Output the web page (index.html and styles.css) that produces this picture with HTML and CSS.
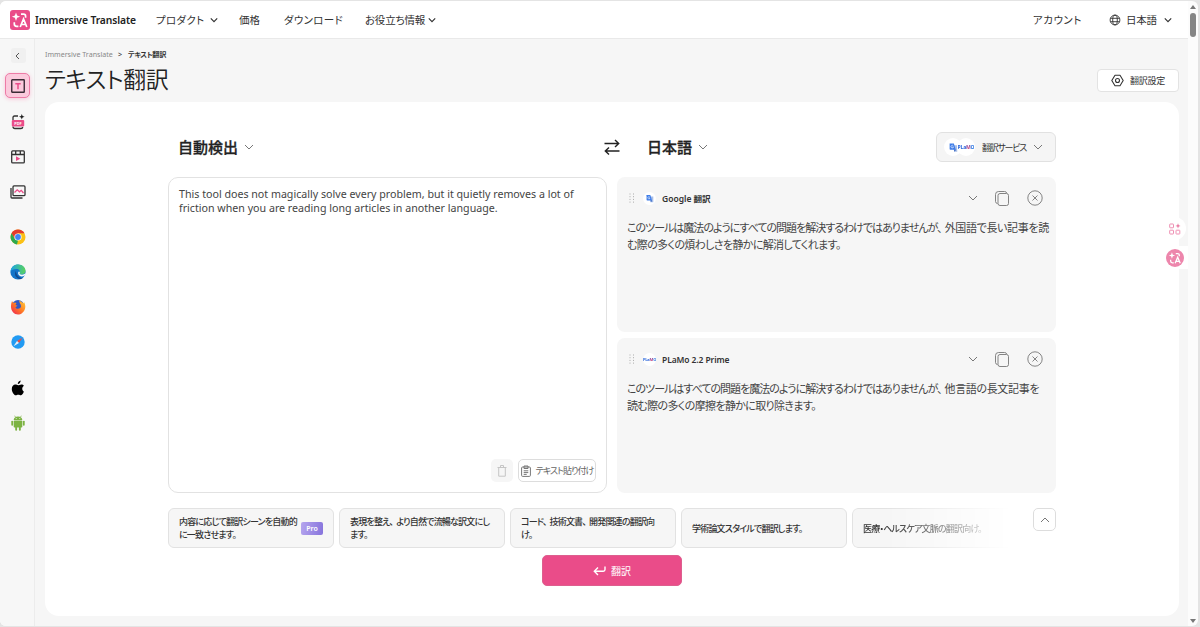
FILE: index.html
```
<!DOCTYPE html>
<html lang="ja">
<head>
    <meta charset="UTF-8">
    <meta name="viewport" content="width=device-width, initial-scale=1.0">
    <title>テキスト翻訳</title>
    <link rel="stylesheet" href="styles.css">
</head>
<body>
    <svg class="sprite" width="0" height="0">
        <symbol id="down" viewBox="0 0 10 10"><path d="M1 3l4 4 4-4" fill="none" stroke="currentColor"/></symbol>
        <symbol id="lang" viewBox="0 0 20 20">
            <path d="M6 2.500l1.100 3.100 3.100 1.100-3.100 1.100L6 10.900 4.900 7.800 1.800 6.700l3.100-1.100z" fill="#fff"/>
            <path d="M11 4.200h2.600q2 0 2 2v1.600M4.300 12.200v1.800q0 2.300 2.300 2.300h1.800M10.200 17l3.300-8 3.300 8M11.400 14.500h4.200" fill="none" stroke="#fff" stroke-width="1.700"/>
        </symbol>
        <symbol id="gtr" viewBox="0 0 12 12">
            <path d="M5 3h6v8.500H7z" fill="#a9bfe8"/>
            <path d="M1 .8h5.500L9 9H1.800Q.8 9 .8 8V1z" fill="#3f7de8"/>
            <path d="M5.800 4A1.700 1.700 0 1 0 6 5.300H4.500" fill="none" stroke="#fff" stroke-width=".8"/>
            <path d="M7 9h2.300L7.300 11.500z" fill="#2457b8"/>
        </symbol>
        <symbol id="copy" viewBox="0 0 14 15">
            <rect x="3" y="2.500" width="10.500" height="12" rx="2"/><path d="M2.500 12.500Q.5 12.300.5 10.500v-7Q.5.5 3.500.5h6q1.800 0 2.200 1.500"/>
        </symbol>
        <symbol id="close" viewBox="0 0 16 16">
            <circle cx="8" cy="8" r="7.200"/><path d="M5.500 5.500l5 5M10.500 5.500l-5 5"/>
        </symbol>
        <symbol id="grip" viewBox="0 0 6 10">
            <path d="M.5 1h1M4 1h1M.5 3.700h1M4 3.700h1M.5 6.400h1M4 6.400h1M.5 9.100h1M4 9.100h1" stroke="#aaa" stroke-width="1"/>
        </symbol>
    </svg>
    <div class="window">
        <header class="header">
            <svg class="header__logo" viewBox="0 0 20 20"><rect width="20" height="20" rx="3" fill="#ea4c89"/><use href="#lang"/></svg>
            <div class="header__brand">Immersive Translate</div>
            <nav class="nav">
                <a class="nav__item nav__product">プロダクト</a><svg class="nav__arrow"><use href="#down"/></svg>
                <a class="nav__item nav__price">価格</a>
                <a class="nav__item nav__download">ダウンロード</a>
                <a class="nav__item nav__info">お役立ち情報</a><svg class="nav__arrow"><use href="#down"/></svg>
            </nav>
            <a class="nav__item nav__account">アカウント</a>
            <svg class="header__globe" viewBox="0 0 12 12"><g fill="none" stroke="#333" stroke-width=".9"><circle cx="6" cy="6" r="4.900"/><ellipse cx="6" cy="6" rx="2.300" ry="4.900"/><path d="M1.500 4.300h9M1.500 7.700h9"/></g></svg>
            <a class="nav__item nav__lang">日本語</a><svg class="nav__arrow nav__arrow_last"><use href="#down"/></svg>
        </header>
        <div class="body">
            <aside class="sidebar">
                <div class="sidebar__back"><svg width="8" height="8" viewBox="0 0 8 8"><path d="M5 1L2 4l3 3" fill="none" stroke="#555"/></svg></div>
                <div class="sidebar__item sidebar__item_active">
                    <svg width="14" height="14" viewBox="0 0 14 14"><rect x=".75" y=".75" width="12.500" height="12.500" rx=".5" fill="none" stroke="#3a2b35" stroke-width="1.400"/><path d="M4.300 4.700h5.400M7 4.700v5.600" stroke="#ea4c89" stroke-width="1.500"/></svg>
                </div>
                <div class="sidebar__item">
                    <svg width="14" height="16" viewBox="0 0 14 16"><path d="M2 6V3.500Q2 2 3.500 2H7M2 12.500Q2 14.500 4 14.500h6q1.500 0 1.800-1.500" fill="none" stroke="#333" stroke-width="1.300"/><path d="M10.800 0l.8 2 2 .8-2 .8-.8 2-.8-2-2-.8 2-.8z" fill="#222"/><rect x=".8" y="6" width="12.400" height="6.500" rx="1" fill="#ea4c89"/><text x="7" y="11" class="pdf">PDF</text></svg>
                </div>
                <div class="sidebar__item">
                    <svg width="14" height="14" viewBox="0 0 14 14"><g fill="none" stroke="#333" stroke-width="1.300"><rect x=".7" y=".9" width="12.600" height="12" rx="1"/><path d="M1 4.500h12M4.700 1v3.500M9.300 1v3.500"/></g><path d="M5 6.300l4.300 2.400L5 11.100z" fill="#ea4c89"/></svg>
                </div>
                <div class="sidebar__item">
                    <svg width="16" height="14" viewBox="0 0 16 14"><g fill="none" stroke="#333" stroke-width="1.300"><rect x="3" y=".9" width="12" height="9.800" rx="1"/><path d="M1 3v9q0 1 1 1h10.500"/></g><path d="M4.500 7.500l2.700-2.700 2.300 2 1.700-1.500L13.500 8" fill="none" stroke="#ea4c89" stroke-width="1.300"/></svg>
                </div>
                <div class="sidebar__item sidebar__item_browser">
                    <svg width="16" height="16" viewBox="0 0 16 16"><circle cx="8" cy="8" r="7.500" fill="#fbc116"/><path d="M1.500 4.300A7.500 7.500 0 0 1 14.500 4.300H8L4.800 9.800z" fill="#e33b2e"/><path d="M1.500 4.300L4.800 9.800 8 11.500 7 15.400A7.500 7.500 0 0 1 1.500 4.300" fill="#2da94f"/><circle cx="8" cy="8" r="3.600" fill="#fff"/><circle cx="8" cy="8" r="2.900" fill="#4285f4"/></svg>
                </div>
                <div class="sidebar__item">
                    <svg width="16" height="16" viewBox="0 0 16 16"><defs><linearGradient id="edge"><stop offset="0" stop-color="#1ba4e6"/><stop offset="1" stop-color="#5bd35b"/></linearGradient></defs><circle cx="8" cy="8" r="7.600" fill="#1374c9"/><path d="M.5 7.500C1 3 4 .4 8 .4c4.500 0 7.500 3 7.500 6.300 0 2.500-2 3.800-4 3.800-1.500 0-2.500-.7-2-1.500C10.500 7 9 5 6.500 5 3.500 5 1 6 .5 7.500" fill="url(#edge)"/><path d="M6 7c-2.500 3 0 7.500 4 8.200l3-1C9 14 6 11 6 7" fill="#124b91"/><path d="M8.800 7.500c-1.300 1-.8 3.800 1.700 4.700 2 .6 3.600 0 5-1.200V9.300c-1.500 1.500-4 1.700-5.500.9-.9-.5-.2-1.500-.1-2.200z" fill="#f4f8fb"/></svg>
                </div>
                <div class="sidebar__item">
                    <svg width="16" height="16" viewBox="0 0 16 16"><defs><linearGradient id="fox" x1="1" x2="0" y2="1"><stop offset="0" stop-color="#ffd43a"/><stop offset=".5" stop-color="#ff7b25"/><stop offset="1" stop-color="#ed1c58"/></linearGradient></defs><circle cx="8" cy="7" r="6" fill="#3158c4"/><path d="M2 2l1.300 2Q5 3.200 6.500 4L5.500 6l2 .8-2 1.500c.5 1.600 3 2.100 4.600.8 1.300-1 1.200-3-.2-4.600L9 1.200l4.500 3 .5-1.300c1.200 2 1.700 4.500 1 6.800-1 3.500-4 5.800-7 5.800C3 15.500-1 10 2 2" fill="url(#fox)"/></svg>
                </div>
                <div class="sidebar__item">
                    <svg width="14" height="14" viewBox="0 0 14 14"><circle cx="7" cy="7" r="6.700" fill="#229bf3"/><path d="M11.500 2.700L8 8 6 6z" fill="#f04a3e"/><path d="M2.500 11.300L6 6l2 2z" fill="#e8eef5"/></svg>
                </div>
                <div class="sidebar__item sidebar__item_os">
                    <svg width="14" height="16" viewBox="0 0 14 16"><path d="M9.700.5C9.700 2.500 8.200 4 6.800 3.900 6.700 2.200 8 .8 9.700.5M12.800 11.800c-.8 2-1.900 3.500-3 3.500-1 0-1.300-.6-2.500-.6s-1.600.6-2.500.6C3 15.300.8 12 .8 9 .8 6 2.500 4.500 4.300 4.500c1.200 0 2 .7 2.900.7.900 0 1.700-.8 3.200-.8 1 0 2 .5 2.500 1.400-2.400 1.500-2 5 .2 6" fill="#000"/></svg>
                </div>
                <div class="sidebar__item">
                    <svg width="14" height="16" viewBox="0 0 14 16"><g fill="#7cb342"><path d="M2.700 5Q3 1.500 7 1.500T11.300 5z"/><rect x="2.700" y="5.600" width="8.600" height="6.900" rx=".8"/><rect x=".3" y="5.700" width="1.800" height="5" rx=".9"/><rect x="11.900" y="5.700" width="1.800" height="5" rx=".9"/><rect x="4.200" y="11" width="1.900" height="4.700" rx=".9"/><rect x="7.900" y="11" width="1.900" height="4.700" rx=".9"/></g><path d="M4.500 2.200L3.700.7M9.500 2.200l.8-1.500" stroke="#7cb342" stroke-width=".7"/><path d="M4.800 3.500h.8M8.400 3.500h.8" stroke="#fff" stroke-width=".8"/></svg>
                </div>
            </aside>
            <main class="main">
                <div class="crumbs"><span class="crumbs__home">Immersive Translate</span><span class="crumbs__sep">&gt;</span><b class="crumbs__page">テキスト翻訳</b></div>
                <div class="title">
                    <h1 class="title__text">テキスト翻訳</h1>
                    <div class="title__settings">
                        <svg width="13" height="13" viewBox="0 0 13 13"><g fill="none" stroke="#333" stroke-width="1.100"><path d="M4 1.200h5l3.200 5.300L9 11.800H4L.8 6.500z" stroke-linejoin="round"/><circle cx="6.500" cy="6.500" r="2"/></g></svg>
                        <span>翻訳設定</span>
                    </div>
                </div>
                <section class="card">
                    <div class="langs">
                        <div class="langs__from"><b>自動検出</b><svg class="chev"><use href="#down"/></svg></div>
                        <svg class="langs__swap" viewBox="0 0 16 16"><path d="M.5 4.500h14M11 1l3.700 3.500L11 8M15.500 12h-14M5 8.500L1.300 12 5 15.500" fill="none" stroke="#222" stroke-width="1.400"/></svg>
                        <div class="langs__to"><b>日本語</b><svg class="chev"><use href="#down"/></svg></div>
                        <div class="services">
                            <span class="services__icon"><svg width="9" height="11"><use href="#gtr"/></svg></span><span class="services__icon services__icon_second"><i class="plamo">PLaMO</i></span>
                            <span class="services__text">翻訳サービス</span><svg class="chev"><use href="#down"/></svg>
                        </div>
                    </div>
                    <div class="panels">
                        <div class="source">
                            <div class="source__text">This tool does not magically solve every problem, but it quietly removes a lot of<br>friction when you are reading long articles in another language.</div>
                            <div class="source__tools">
                                <div class="source__trash"><svg width="10" height="12" viewBox="0 0 10 12"><path d="M.5 2.500h9M3.500 2.500v-2h3v2M1.700 2.500v8.700h6.600V2.500" fill="none" stroke="#c5c5c5"/></svg></div>
                                <div class="source__paste"><svg width="10" height="12" viewBox="0 0 10 12"><g fill="none" stroke="#777"><rect x=".6" y="2" width="8.800" height="9.400" rx="1"/><path d="M3 3.500v-2.500h4v2.500zM2.700 5.800h4.600M2.700 7.600h4.600M2.700 9.400h3"/></g></svg><span>テキスト貼り付け</span></div>
                            </div>
                        </div>
                        <div class="results">
                            <div class="result">
                                <div class="result__head">
                                    <svg class="result__grip"><use href="#grip"/></svg>
                                    <span class="result__icon"><svg width="8" height="9"><use href="#gtr"/></svg></span>
                                    <b class="result__name">Google 翻訳</b>
                                    <svg class="chev"><use href="#down"/></svg><svg class="result__copy"><use href="#copy"/></svg><svg class="result__close"><use href="#close"/></svg>
                                </div>
                                <p class="result__text"><span class="tight">このツールは魔法のようにすべての問題を解決するわけではありませんが<span class="comma">、</span></span><span class="loose">外国語で長い記事を読</span><br>む際の多くの煩わしさを静かに解消してくれます。</p>
                            </div>
                            <div class="result">
                                <div class="result__head">
                                    <svg class="result__grip"><use href="#grip"/></svg>
                                    <span class="result__icon"><i class="plamo plamo_small">PLaMO</i></span>
                                    <b class="result__name result__name_plamo">PLaMo 2.2 Prime</b>
                                    <svg class="chev"><use href="#down"/></svg><svg class="result__copy"><use href="#copy"/></svg><svg class="result__close"><use href="#close"/></svg>
                                </div>
                                <p class="result__text"><span class="tight">このツールはすべての問題を魔法のように解決するわけではありませんが<span class="comma">、</span></span><span class="loose">他言語の長文記事を</span><br>読む際の多くの摩擦を静かに取り除きます。</p>
                            </div>
                        </div>
                    </div>
                    <div class="scenes">
                        <div class="scene"><span>内容に応じて翻訳シーンを自動的<br>に一致させます。</span><em class="scene__pro">Pro</em></div>
                        <div class="scene"><span>表現を整え<span class="comma">、</span>より自然で流暢な訳文にし<br>ます。</span></div>
                        <div class="scene"><span>コード<span class="comma">、</span>技術文書<span class="comma">、</span>開発関連の翻訳向<br>け。</span></div>
                        <div class="scene"><span>学術論文スタイルで翻訳します。</span></div>
                        <div class="scene scene_fade"><span>医療・ヘルスケア文脈の翻訳向け。</span></div>
                        <div class="scenes__toggle"><svg class="chev"><use href="#down"/></svg></div>
                    </div>
                    <button class="submit"><svg width="13" height="10" viewBox="0 0 13 10"><path d="M12 .5v3q0 1.700-1.700 1.700H1.500M5 1.500L1.300 5.200 5 9" fill="none" stroke="#fff" stroke-width="1.400"/></svg><span>翻訳</span></button>
                </section>
            </main>
            <div class="float float_grid"><svg width="12" height="12" viewBox="0 0 12 12"><g fill="none" stroke="#ee8fb2"><rect x=".7" y="1" width="3.800" height="3.800" rx=".5"/><rect x=".7" y="7.200" width="3.800" height="3.800" rx=".5"/><rect x="7" y="7.200" width="3.800" height="3.800" rx=".5"/></g><path d="M9 .3l.7 1.900 1.900.7-1.900.7L9 5.500l-.7-1.900-1.900-.7 1.900-.7z" fill="#e9739e"/></svg></div>
            <div class="float float_lang"><svg width="18" height="18" viewBox="0 0 20 20"><circle cx="10" cy="10" r="10" fill="#ed86ac"/><g transform="translate(1.500 1.500) scale(.85)"><use href="#lang" width="20" height="20"/></g></svg></div>
        </div>
        <div class="scrollbar"><i class="scrollbar__up"></i><i class="scrollbar__thumb"></i><i class="scrollbar__down"></i></div>
    </div>
</body>
</html>
```
FILE: styles.css
```
*, *::before, *::after {
    box-sizing: border-box;
}
body {
    margin: 0;
    background: #e4e4e4;
    font-family: "Noto Sans", "Noto Sans CJK JP", sans-serif;
    font-feature-settings: "palt";
    color: #333;
    white-space: nowrap;
    overflow: hidden;
}
svg {
    flex: none;
}
.sprite {
    position: absolute;
}
.window {
    position: relative;
    width: 1198px;
    height: 625px;
    margin-top: 1px;
    padding-right: 10px;
    background: #fcfcfc;
    border-radius: 6px;
    overflow: hidden;
}
.header {
    display: flex;
    align-items: center;
    height: 38px;
    padding-left: 10px;
    background: #fff;
    border-bottom: 1px solid #e9e9e9;
}
.header__logo {
    width: 20px;
    height: 20px;
}
.header__brand {
    width: 121px;
    margin-left: 5px;
    font-size: 10.3px;
    font-weight: 600;
    letter-spacing: -0.1px;
    color: #222;
}
.nav {
    display: flex;
    align-items: center;
    flex: 1;
}
.nav__item {
    font-size: 10.5px;
}
.nav__product {
    width: 54px;
    letter-spacing: 0.3px;
}
.nav__price {
    width: 45px;
    margin-left: 21px;
}
.nav__download {
    width: 81px;
    letter-spacing: 0.3px;
}
.nav__info {
    width: 63px;
    letter-spacing: -0.2px;
}
.nav__arrow {
    width: 8px;
    height: 8px;
    stroke-width: 1.5;
}
.nav__account {
    width: 76px;
    letter-spacing: 0.5px;
}
.header__globe {
    width: 12px;
    height: 12px;
    margin-right: 5px;
}
.nav__lang {
    width: 38px;
    letter-spacing: -0.3px;
}
.nav__arrow_last {
    margin-right: 16px;
}
.body {
    display: flex;
    height: 587px;
    background: #f6f6f6;
}
.sidebar {
    display: flex;
    flex-direction: column;
    align-items: center;
    width: 35px;
    padding-top: 9px;
    border-right: 1px solid #ececec;
    background: #f7f7f7;
}
.sidebar__back {
    display: flex;
    align-items: center;
    justify-content: center;
    width: 15px;
    height: 15px;
    margin: 0 0 10px 2px;
    border-radius: 3px;
    background: #f0f0f0;
}
.sidebar__item {
    display: flex;
    align-items: center;
    justify-content: center;
    width: 25px;
    height: 25px;
    margin: 0 0 10px 2px;
}
.sidebar__item_active {
    margin: 0 0 11px;
    padding-left: 1px;
    border: 1px solid #ed7ba6;
    border-radius: 5px;
    background: #fbc9dc;
    box-shadow: 0 1px 4px #f8c4d7;
}
.sidebar__item_browser {
    margin-top: 10px;
}
.sidebar__item_os {
    margin-top: 11px;
}
.pdf {
    font: bold 4px "Noto Sans", sans-serif;
    fill: #fff;
    text-anchor: middle;
}
.main {
    width: 1134px;
    margin-left: 10px;
}
.crumbs {
    display: flex;
    align-items: center;
    height: 12px;
    margin-top: 9px;
    font-size: 7.1px;
}
.crumbs__home {
    width: 73px;
    color: #888;
}
.crumbs__page {
    margin-left: 6px;
    letter-spacing: -0.3px;
    font-weight: 600;
}
.title {
    display: flex;
    align-items: center;
    justify-content: space-between;
    height: 40px;
}
.title__text {
    margin: -4px 0 0;
    font-size: 23px;
    font-weight: 350;
    letter-spacing: -0.5px;
    color: #222;
}
.title__settings {
    display: flex;
    align-items: center;
    justify-content: center;
    gap: 6px;
    width: 82px;
    height: 23px;
    border: 1px solid #e3e3e3;
    border-radius: 4px;
    background: #fff;
    font-size: 9px;
    letter-spacing: -0.2px;
}
.card {
    height: 514px;
    margin-top: 2px;
    padding: 30px 123px 0 123px;
    border-radius: 14px;
    background: #fff;
}
.chev {
    width: 10px;
    height: 10px;
    color: #777;
}
.comma {
    margin-right: 3px;
}
.tight {
    letter-spacing: -1px;
}
.loose {
    letter-spacing: -0.35px;
}
.langs {
    display: flex;
    align-items: center;
    height: 30px;
    padding-left: 10px;
    font-size: 15px;
    color: #222;
}
.langs b {
    margin-top: -2px;
    font-weight: 500;
    -webkit-text-stroke: 0.3px #222;
}
.langs__from, .langs__to {
    display: flex;
    align-items: center;
    gap: 6px;
}
.langs__from {
    width: 426px;
}
.langs__swap {
    width: 16px;
    height: 16px;
}
.langs__to {
    flex: 1;
    margin-left: 27px;
}
.services {
    display: flex;
    align-items: center;
    width: 120px;
    height: 30px;
    padding-left: 7px;
    border: 1px solid #e1e1e1;
    border-radius: 6px;
    background: #f5f5f5;
}
.services__icon {
    display: flex;
    align-items: center;
    justify-content: center;
    width: 18px;
    height: 18px;
    border-radius: 50%;
    background: #fff;
}
.services__icon_second {
    margin-left: -5px;
}
.services__text {
    width: 51px;
    margin-left: 7px;
    font-size: 9px;
    letter-spacing: -1.3px;
    color: #333;
}
.plamo {
    font: 800 5px "Noto Sans", sans-serif;
    letter-spacing: -0.2px;
    background: linear-gradient(90deg, #2d69dc 45%, #d93c70 65%, #2d79e4 85%);
    -webkit-background-clip: text;
    color: transparent;
}
.plamo_small {
    font-size: 4px;
}
.panels {
    display: flex;
    gap: 10px;
    height: 316px;
    margin-top: 15px;
}
.source {
    display: flex;
    flex: none;
    flex-direction: column;
    justify-content: space-between;
    width: 439px;
    padding: 9px 10px 10px;
    border: 1px solid #e2e2e2;
    border-radius: 10px;
}
.source__text {
    font-size: 10.67px;
    line-height: 14px;
    color: #444;
}
.source__tools {
    display: flex;
    justify-content: flex-end;
    gap: 5px;
}
.source__trash, .source__paste {
    display: flex;
    align-items: center;
    justify-content: center;
    width: 22px;
    height: 23px;
    border-radius: 5px;
    background: #f6f6f6;
}
.source__paste {
    gap: 5px;
    width: 78px;
    border: 1px solid #ddd;
    background: #fff;
    font-size: 9px;
    letter-spacing: -1px;
    color: #666;
}
.results {
    display: flex;
    flex-direction: column;
    gap: 6px;
    flex: 1;
    min-width: 0;
}
.result {
    flex: 1;
    padding: 10px;
    border-radius: 8px;
    background: #f6f6f6;
}
.result__head {
    display: flex;
    align-items: center;
    height: 22px;
    padding-left: 2px;
}
.result__grip {
    width: 6px;
    height: 10px;
}
.result__icon {
    display: flex;
    align-items: center;
    justify-content: center;
    width: 13px;
    height: 13px;
    margin-left: 8px;
    border-radius: 50%;
    background: #fff;
}
.result__name {
    flex: 1;
    margin-left: 6px;
    font-size: 8.5px;
    font-weight: 600;
}
.result__name_plamo {
    letter-spacing: -0.1px;
}
.result__copy, .result__close {
    width: 14px;
    height: 15px;
    margin-left: 17px;
    fill: none;
    stroke: #777;
    stroke-width: 0.9;
}
.result__close {
    width: 16px;
    height: 16px;
    margin: 0 3px 0 18px;
}
.result__text {
    margin: 10px 0 0;
    font-size: 11px;
    line-height: 17px;
    letter-spacing: -0.65px;
    color: #444;
}
.scenes {
    display: flex;
    gap: 5px;
    height: 40px;
    margin-top: 15px;
}
.scene {
    display: flex;
    align-items: center;
    justify-content: space-between;
    width: 166px;
    flex: none;
    padding: 0 10px;
    border: 1px solid #e2e2e2;
    border-radius: 6px;
    background: #f6f6f6;
    font-size: 9px;
    line-height: 13px;
    letter-spacing: -0.8px;
    font-weight: 500;
}
.scene__pro {
    width: 22px;
    height: 13px;
    border-radius: 2px;
    background: linear-gradient(100deg, #b5a5ee, #8673dc);
    color: #fff;
    font-size: 7px;
    font-style: normal;
    font-weight: 600;
    letter-spacing: 0;
    text-align: center;
}
.scene_fade {
    -webkit-mask-image: linear-gradient(90deg, #000 20%, transparent 95%);
    mask-image: linear-gradient(90deg, #000 20%, transparent 95%);
}
.scenes__toggle {
    display: flex;
    align-items: center;
    justify-content: center;
    width: 23px;
    height: 23px;
    margin-left: 10px;
    border: 1px solid #ddd;
    border-radius: 5px;
}
.scenes__toggle .chev {
    transform: rotate(180deg);
}
.submit {
    display: flex;
    align-items: center;
    justify-content: center;
    gap: 5px;
    width: 140px;
    height: 31px;
    margin: 7px 0 0 374px;
    padding: 0;
    border: 1px solid #dd5f8e;
    border-radius: 5px;
    background: #ea4c89;
    color: #fff;
    font-family: inherit;
    font-size: 10px;
}
.float {
    position: absolute;
    display: flex;
    align-items: center;
    justify-content: center;
    background: #fff;
}
.float_grid {
    left: 1163px;
    top: 216px;
    width: 23px;
    height: 23px;
    border-radius: 50%;
}
.float_lang {
    left: 1164px;
    top: 245px;
    width: 24px;
    height: 23px;
    padding-right: 2px;
    border-radius: 12px 0 0 12px;
}
.scrollbar {
    position: absolute;
    top: 0;
    right: 0;
    width: 10px;
    height: 625px;
}
.scrollbar i {
    position: absolute;
    left: 2px;
}
.scrollbar__up, .scrollbar__down {
    border: 3px solid transparent;
}
.scrollbar__up {
    top: 1px;
    border-bottom: 4px solid #777;
}
.scrollbar__down {
    bottom: 0;
    border-top: 4px solid #777;
}
.scrollbar__thumb {
    top: 12px;
    width: 6px;
    height: 24px;
    border-radius: 3px;
    background: #858585;
}
```
